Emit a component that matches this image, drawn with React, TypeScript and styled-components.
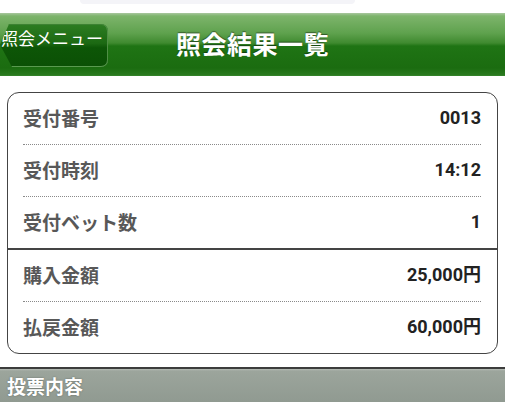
import React from 'react';
import styled, { createGlobalStyle } from 'styled-components';

const GlobalStyle = createGlobalStyle`
  html, body {
    margin: 0;
    padding: 0;
    background: #fff;
  }
  body {
    font-family: Roboto, "Noto Sans CJK JP", sans-serif;
  }
`;

type Item = {
  label: string;
  value: string;
};

const groups: Item[][] = [
  [
    { label: '受付番号', value: '0013' },
    { label: '受付時刻', value: '14:12' },
    { label: '受付ベット数', value: '1' },
  ],
  [
    { label: '購入金額', value: '25,000円' },
    { label: '払戻金額', value: '60,000円' },
  ],
];

const TopStrip = styled.div`
  height: 13px;
  display: flex;
  padding-left: 80px;
`;

const SearchEdge = styled.div`
  width: 275px;
  height: 4px;
  background: #f4f4f8;
  border-radius: 0 0 8px 8px;
`;

const Header = styled.header`
  height: 63px;
  display: grid;
  grid-template-columns: 1fr auto 1fr;
  align-items: center;
  background: linear-gradient(
    to bottom,
    #a9c79f 0px,
    #7db46b 3px,
    #5fa24e 20px,
    #3f8a2f 30px,
    #1f7414 33px,
    #1b6c10 55px,
    #2a7a1f 62px,
    #3b8830 63px
  );
`;

const BackButton = styled.button`
  justify-self: start;
  align-self: start;
  margin-top: 11px;
  width: 108px;
  height: 43px;
  padding: 5px 0 0 1px;
  border: none;
  border-radius: 0 7px 7px 0;
  clip-path: polygon(9px 0, 100% 0, 100% 100%, 12px 100%, 0 48%);
  background: linear-gradient(to bottom, #2d7d22 0%, #1c6913 45%, #0d5607 55%, #0b5005 100%);
  box-shadow: inset -1px 0 0 #4f8f45, inset 0 -1px 0 #5a9a50, inset 0 1px 0 #3d8233;
  color: #fff;
  font-family: "Noto Sans CJK JP", sans-serif;
  font-size: 17px;
  line-height: 17px;
  text-align: left;
  white-space: nowrap;
  display: flex;
  align-items: flex-start;
`;

const Title = styled.h1`
  margin: 0 0 2px;
  color: #fff;
  font-family: "Noto Sans CJK JP", sans-serif;
  font-weight: 700;
  font-size: 25px;
  line-height: 1;
  letter-spacing: 0.5px;
  text-shadow: 0 -1px 1px rgba(0, 0, 0, 0.45);
`;

const Card = styled.section`
  margin: 16px 7px 0;
  border: 1px solid #444;
  border-radius: 12px;
  background: #fff;
`;

const Group = styled.div`
  & + & {
    border-top: 2px solid #444;
  }
`;

const Row = styled.div`
  height: 51px;
  margin: 0 16px 0 15px;
  display: flex;
  align-items: center;
  justify-content: space-between;
  border-bottom: 1px dotted #8a8a8a;
  &:last-child {
    border-bottom: none;
  }
`;

const Label = styled.span`
  font-family: "Noto Sans CJK JP", sans-serif;
  font-weight: 700;
  font-size: 19px;
  line-height: 1;
  margin-bottom: 2px;
  color: #585858;
`;

const Value = styled.span`
  font-family: Roboto, "Noto Sans CJK JP", sans-serif;
  font-weight: 700;
  font-size: 18px;
  line-height: 1;
  margin-bottom: 2px;
  color: #222;
`;

const SectionBar = styled.div`
  margin-top: 13px;
  height: 33px;
  border-top: 2px solid #3c3c3c;
  background: linear-gradient(to bottom, #b5bcb5 0px, #9ca59c 2px, #909a91 100%);
  display: flex;
  align-items: center;
  padding-left: 7px;
  color: #fff;
  font-family: "Noto Sans CJK JP", sans-serif;
  font-weight: 700;
  font-size: 19px;
  text-shadow: 0 0 2px rgba(0, 0, 0, 0.35);
`;

const App = () => {
  return (
    <>
      <GlobalStyle />
      <TopStrip>
        <SearchEdge />
      </TopStrip>
      <Header>
        <BackButton>照会メニュー</BackButton>
        <Title>照会結果一覧</Title>
        <span />
      </Header>
      <Card>
        {groups.map((items, i) => (
          <Group key={i}>
            {items.map((item) => (
              <Row key={item.label}>
                <Label>{item.label}</Label>
                <Value>{item.value}</Value>
              </Row>
            ))}
          </Group>
        ))}
      </Card>
      <SectionBar>投票内容</SectionBar>
    </>
  );
};

export default App;
